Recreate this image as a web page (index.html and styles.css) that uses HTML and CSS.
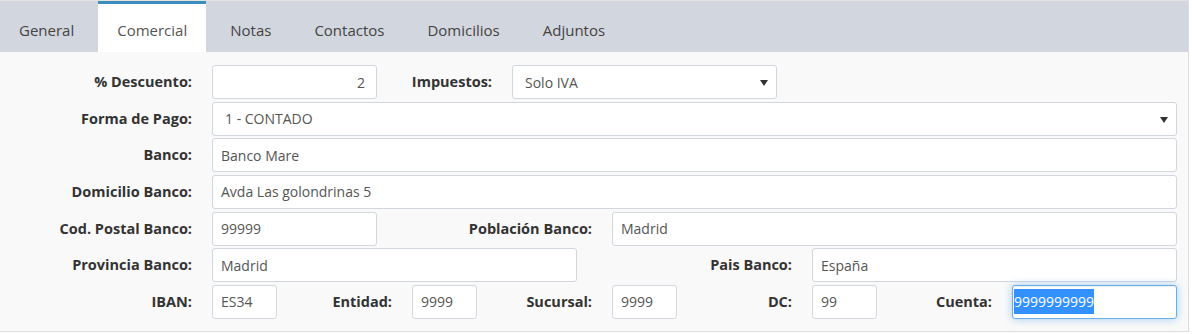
FILE: index.html
```html
<!DOCTYPE html>
<html lang="es">
<head>
    <meta charset="UTF-8">
    <meta name="viewport" content="width=device-width, initial-scale=1.0">
    <title>Cliente - Comercial</title>
    <link rel="stylesheet" href="styles.css">
</head>
<body>
    <div class="panel">
        <ul class="tabs">
            <li>General</li>
            <li class="active">Comercial</li>
            <li>Notas</li>
            <li>Contactos</li>
            <li>Domicilios</li>
            <li>Adjuntos</li>
        </ul>

        <form class="form">
            <label class="lbl span2">% Descuento:</label>
            <div class="ctl span2"><input class="field right" type="text" value="2"></div>
            <label class="lbl span1">Impuestos:</label>
            <div class="ctl span3">
                <div class="select">
                    <select class="field"><option>Solo IVA</option></select>
                </div>
            </div>
            <div class="span4"></div>

            <label class="lbl span2">Forma de Pago:</label>
            <div class="ctl span10">
                <div class="select">
                    <select class="field"><option>1 - CONTADO</option></select>
                </div>
            </div>

            <label class="lbl span2">Banco:</label>
            <div class="ctl span10"><input class="field" type="text" value="Banco Mare"></div>

            <label class="lbl span2">Domicilio Banco:</label>
            <div class="ctl span10"><input class="field" type="text" value="Avda Las golondrinas 5"></div>

            <label class="lbl span2">Cod. Postal Banco:</label>
            <div class="ctl span2"><input class="field" type="text" value="99999"></div>
            <label class="lbl span2">Población Banco:</label>
            <div class="ctl span6"><input class="field" type="text" value="Madrid"></div>

            <label class="lbl span2">Provincia Banco:</label>
            <div class="ctl span4"><input class="field" type="text" value="Madrid"></div>
            <label class="lbl span2">Pais Banco:</label>
            <div class="ctl span4"><input class="field" type="text" value="España"></div>

            <label class="lbl span2">IBAN:</label>
            <div class="ctl span1"><input class="field" type="text" value="ES34"></div>
            <label class="lbl span1">Entidad:</label>
            <div class="ctl span1"><input class="field" type="text" value="9999"></div>
            <label class="lbl span1">Sucursal:</label>
            <div class="ctl span1"><input class="field" type="text" value="9999"></div>
            <label class="lbl span1">DC:</label>
            <div class="ctl span1"><input class="field" type="text" value="99"></div>
            <label class="lbl span1">Cuenta:</label>
            <div class="ctl span2"><div class="field focused"><span class="selected">9999999999</span></div></div>
        </form>
    </div>
</body>
</html>
```

FILE: styles.css
```css
*{
    margin: 0px;
    padding: 0px;
    box-sizing: border-box;
}
body{
    font-family: "Open Sans", Arial, sans-serif;
    font-size: 14px;
    color: #333;
    background-color: #fff;
}
.panel{
    width: 1189px;
    background-color: #f9f9f9;
    border-right: 1px solid #dcdcdc;
    border-bottom: 1px solid #dcdcdc;
    overflow: hidden;
}
.tabs{
    list-style: none;
    display: flex;
    background-color: #d2d6de;
    border-top: 1px solid #e2e3dc;
}
.tabs li{
    height: 51px;
    margin-right: 5px;
    padding: 16px 19px 12px 19px;
    font-size: 15px;
    line-height: 20px;
    color: #444;
    border-top: 3px solid transparent;
}
.tabs li.active{
    background-color: #fff;
    border-top-color: #3c8dbc;
    color: #555;
}
.form{
    display: grid;
    grid-template-columns: repeat(12, 100px);
    grid-auto-rows: 34px;
    row-gap: 2.67px;
    padding: 13px 0px 12px 0px;
}
.span1{ grid-column: span 1; }
.span2{ grid-column: span 2; }
.span3{ grid-column: span 3; }
.span4{ grid-column: span 4; }
.span6{ grid-column: span 6; }
.span10{ grid-column: span 10; }
.lbl{
    text-align: right;
    font-size: 14.5px;
    font-weight: bold;
    line-height: 34px;
    padding-right: 8px;
    color: #333;
}
.ctl{
    padding: 0px 23px 0px 12px;
}
.field{
    display: block;
    width: 100%;
    height: 34px;
    padding: 0px 8px;
    font-family: "Open Sans", Arial, sans-serif;
    font-size: 14px;
    color: #555;
    background-color: #fff;
    border: 1px solid #d2d6de;
    border-radius: 3px;
    outline: none;
}
.right{
    text-align: right;
    padding-right: 11px;
}
.select{
    position: relative;
}
.select select{
    appearance: none;
    -webkit-appearance: none;
    padding-left: 12px;
}
.select::after{
    content: "";
    position: absolute;
    right: 9px;
    top: 15px;
    border-left: 4px solid transparent;
    border-right: 4px solid transparent;
    border-top: 6px solid #333;
}
.focused{
    line-height: 32px;
    padding-left: 1px;
    border-color: #66afe9;
    box-shadow: inset 0 1px 1px rgba(0,0,0,.075), 0 0 8px rgba(102,175,233,.6);
}
.selected{
    background-color: #3390ff;
    color: #fff;
    padding: 3px 0px;
}
```
